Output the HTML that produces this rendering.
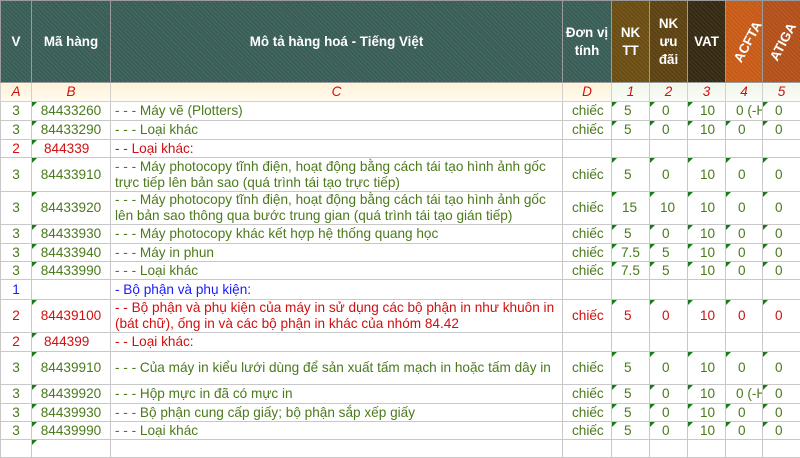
<!DOCTYPE html>
<html><head><meta charset="utf-8"><style>
*{margin:0;padding:0;box-sizing:border-box}
body{width:800px;height:442px;overflow:hidden;background:#fff;font-family:"Liberation Sans",Arial,sans-serif;font-size:13.6px}
table{border-collapse:collapse;table-layout:fixed;width:800px}
td{border:1px solid #c8c8c8;overflow:hidden;white-space:nowrap;vertical-align:middle;position:relative;line-height:16px;color:#4b7a1c;padding-top:0;padding-bottom:0}
thead td{color:#fff;font-weight:bold;text-align:center;border-color:#9a9a9a;line-height:18px;font-size:13.4px;
background-image:repeating-linear-gradient(45deg,rgba(255,255,255,.07) 0 1px,transparent 1px 3px)}
.h1{background-color:#395d57}
.h2{background-color:#6b4d12}
.h3{background-color:#5d4211}
.h4{background-color:#352912}
.h5{background-color:#c85a17}
.h6{background-color:#b3501a}
.rot{display:inline-block;transform:rotate(-62deg);white-space:nowrap}
tr.let td{background:linear-gradient(#fff2da,#fffbef);color:#d01010;font-style:italic;text-align:center;border-color:#d0d0d0}
tr.let td.n{background:linear-gradient(#f0f6ea,#fbfdf8)}
.c{text-align:center}
.d{padding-left:4px;white-space:normal}
.u{padding-left:9px}
.n{padding-left:12px}
.t::before{content:"";position:absolute;left:0;top:0;border-top:5px solid #1a7a1a;border-right:5px solid transparent}
.r td{color:#d01010}
.b td{color:#1a1aff}
</style></head><body>
<table>
<colgroup><col style="width:31px"><col style="width:79px"><col style="width:452px"><col style="width:49px"><col style="width:38px"><col style="width:38px"><col style="width:38px"><col style="width:37px"><col style="width:38px"></colgroup>
<thead><tr style="height:82px">
<td class="h1">V</td><td class="h1">Mã hàng</td><td class="h1">Mô tả hàng hoá - Tiếng Việt</td><td class="h1">Đơn vị<br>tính</td>
<td class="h2">NK<br>TT</td><td class="h3">NK<br>ưu<br>đãi</td><td class="h4">VAT</td>
<td class="h5"><span class="rot">ACFTA</span></td><td class="h6"><span class="rot">ATIGA</span></td></tr></thead>
<tbody>
<tr class="let" style="height:19px"><td>A</td><td>B</td><td>C</td><td>D</td><td class="n" style="padding:0">1</td><td class="n" style="padding:0">2</td><td class="n" style="padding:0">3</td><td class="n" style="padding:0">4</td><td class="n" style="padding:0">5</td></tr>
<tr style="height:19px"><td class="c">3</td><td class="c t">84433260</td><td class="d">- - - Máy vẽ (Plotters)</td><td class="u">chiếc</td><td class="n t">5</td><td class="n t">0</td><td class="n t">10</td><td class="n" style="padding-left:10px">0 (-H</td><td class="n t">0</td></tr>
<tr style="height:19px"><td class="c">3</td><td class="c t">84433290</td><td class="d">- - - Loại khác</td><td class="u">chiếc</td><td class="n t">5</td><td class="n t">0</td><td class="n t">10</td><td class="n t">0</td><td class="n t">0</td></tr>
<tr class="r" style="height:18px"><td class="c">2</td><td class="t" style="padding-left:12px">844339</td><td class="d">- - Loại khác:</td><td></td><td></td><td></td><td></td><td></td><td></td></tr>
<tr style="height:34px"><td class="c">3</td><td class="c t">84433910</td><td class="d">- - - Máy photocopy tĩnh điện, hoạt động bằng cách tái tạo hình ảnh gốc<br>trực tiếp lên bản sao (quá trình tái tạo trực tiếp)</td><td class="u">chiếc</td><td class="n t">5</td><td class="n t">0</td><td class="n t">10</td><td class="n t">0</td><td class="n t">0</td></tr>
<tr style="height:33px"><td class="c">3</td><td class="c t">84433920</td><td class="d">- - - Máy photocopy tĩnh điện, hoạt động bằng cách tái tạo hình ảnh gốc<br>lên bản sao thông qua bước trung gian (quá trình tái tạo gián tiếp)</td><td class="u">chiếc</td><td class="n t" style="padding-left:10px">15</td><td class="n t" style="padding-left:10px">10</td><td class="n t">10</td><td class="n t">0</td><td class="n t">0</td></tr>
<tr style="height:19px"><td class="c">3</td><td class="c t">84433930</td><td class="d">- - - Máy photocopy khác kết hợp hệ thống quang học</td><td class="u">chiếc</td><td class="n t">5</td><td class="n t">0</td><td class="n t">10</td><td class="n t">0</td><td class="n t">0</td></tr>
<tr style="height:18px"><td class="c">3</td><td class="c t">84433940</td><td class="d">- - - Máy in phun</td><td class="u">chiếc</td><td class="n t" style="padding-left:9px">7.5</td><td class="n t">5</td><td class="n t">10</td><td class="n t">0</td><td class="n t">0</td></tr>
<tr style="height:18px"><td class="c">3</td><td class="c t">84433990</td><td class="d">- - - Loại khác</td><td class="u">chiếc</td><td class="n t" style="padding-left:9px">7.5</td><td class="n t">5</td><td class="n t">10</td><td class="n t">0</td><td class="n t">0</td></tr>
<tr class="b" style="height:20px"><td class="c">1</td><td></td><td class="d">- Bộ phận và phụ kiện:</td><td></td><td></td><td></td><td></td><td></td><td></td></tr>
<tr class="r" style="height:33px"><td class="c">2</td><td class="c t">84439100</td><td class="d">- - Bộ phận và phụ kiện của máy in sử dụng các bộ phận in như khuôn in<br>(bát chữ), ống in và các bộ phận in khác của nhóm 84.42</td><td class="u">chiếc</td><td class="n t">5</td><td class="n t">0</td><td class="n t">10</td><td class="n t">0</td><td class="n t">0</td></tr>
<tr class="r" style="height:19px"><td class="c">2</td><td class="t" style="padding-left:12px">844399</td><td class="d">- - Loại khác:</td><td></td><td></td><td></td><td></td><td></td><td></td></tr>
<tr style="height:33px"><td class="c">3</td><td class="c t">84439910</td><td class="d">- - - Của máy in kiểu lưới dùng để sản xuất tấm mạch in hoặc tấm dây in</td><td class="u">chiếc</td><td class="n t">5</td><td class="n t">0</td><td class="n t">10</td><td class="n t">0</td><td class="n t">0</td></tr>
<tr style="height:19px"><td class="c">3</td><td class="c t">84439920</td><td class="d">- - - Hộp mực in đã có mực in</td><td class="u">chiếc</td><td class="n t">5</td><td class="n t">0</td><td class="n t">10</td><td class="n" style="padding-left:10px">0 (-H</td><td class="n t">0</td></tr>
<tr style="height:18px"><td class="c">3</td><td class="c t">84439930</td><td class="d">- - - Bộ phận cung cấp giấy; bộ phận sắp xếp giấy</td><td class="u">chiếc</td><td class="n t">5</td><td class="n t">0</td><td class="n t">10</td><td class="n t">0</td><td class="n t">0</td></tr>
<tr style="height:18px"><td class="c">3</td><td class="c t">84439990</td><td class="d">- - - Loại khác</td><td class="u">chiếc</td><td class="n t">5</td><td class="n t">0</td><td class="n t">10</td><td class="n t">0</td><td class="n t">0</td></tr>
<tr style="height:18px"><td></td><td class="t"></td><td></td><td></td><td></td><td></td><td></td><td></td><td></td></tr>
</tbody></table>
</body></html>
